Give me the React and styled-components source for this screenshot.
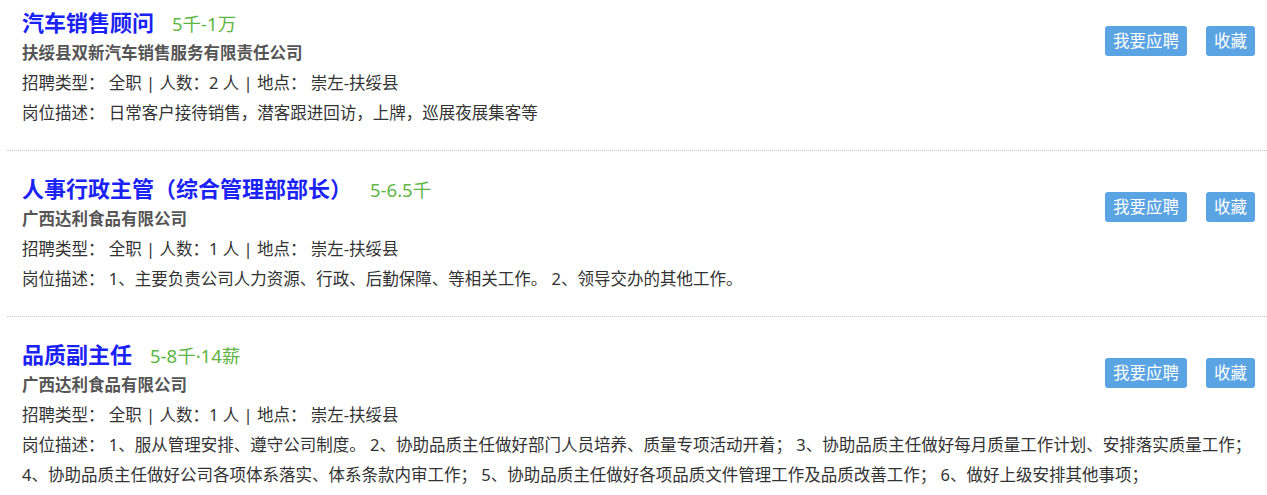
import React from 'react';
import styled, { createGlobalStyle } from 'styled-components';

const GlobalStyle = createGlobalStyle`
  body {
    margin: 0;
    background: #ffffff;
    font-family: "Noto Sans", "Noto Sans CJK SC", sans-serif;
  }
`;

const JobList = styled.div`
  margin: -15px 0 0 7px;
`;

const JobCard = styled.div`
  padding: 21px 8px 22px 15px;
  border-bottom: 1px dotted #c8c8c8;
  overflow: hidden;
`;

const Actions = styled.div`
  float: right;
  display: flex;
  gap: 19px;
  margin: 20px 4px 0 0;
`;

const ActionButton = styled.button`
  height: 30px;
  padding: 0 8px;
  border: none;
  border-radius: 3px;
  background: #5ba4e4;
  color: #ffffff;
  font-family: inherit;
  font-size: 16.5px;
  line-height: 30px;
  cursor: pointer;
`;

const TitleRow = styled.div`
  display: flex;
  align-items: baseline;
  height: 32px;
  line-height: 32px;
`;

const JobTitle = styled.a`
  font-size: 22px;
  font-weight: bold;
  color: #1a22f5;
  text-decoration: none;
`;

const Salary = styled.span`
  margin-left: 18px;
  font-size: 18.5px;
  color: #5db543;
`;

const Company = styled.div`
  font-size: 16.5px;
  font-weight: bold;
  color: #555555;
  line-height: 30px;
`;

const Line = styled.div`
  font-size: 16.5px;
  color: #333333;
  line-height: 30px;
`;

const jobs = [
  {
    title: '汽车销售顾问',
    salary: '5千-1万',
    company: '扶绥县双新汽车销售服务有限责任公司',
    count: 2,
    desc: '日常客户接待销售，潜客跟进回访，上牌，巡展夜展集客等',
  },
  {
    title: '人事行政主管（综合管理部部长）',
    salary: '5-6.5千',
    company: '广西达利食品有限公司',
    count: 1,
    desc: '1、主要负责公司人力资源、行政、后勤保障、等相关工作。 2、领导交办的其他工作。',
  },
  {
    title: '品质副主任',
    salary: '5-8千·14薪',
    company: '广西达利食品有限公司',
    count: 1,
    desc: '1、服从管理安排、遵守公司制度。 2、协助品质主任做好部门人员培养、质量专项活动开着； 3、协助品质主任做好每月质量工作计划、安排落实质量工作； 4、协助品质主任做好公司各项体系落实、体系条款内审工作； 5、协助品质主任做好各项品质文件管理工作及品质改善工作； 6、做好上级安排其他事项；',
  },
];

const App = () => {
  return (
    <>
      <GlobalStyle />
      <JobList>
        {jobs.map((job) => (
          <JobCard key={job.title}>
            <Actions>
              <ActionButton>我要应聘</ActionButton>
              <ActionButton>收藏</ActionButton>
            </Actions>
            <TitleRow>
              <JobTitle href='#'>{job.title}</JobTitle>
              <Salary>{job.salary}</Salary>
            </TitleRow>
            <Company>{job.company}</Company>
            <Line>招聘类型： 全职 | 人数：{job.count} 人 | 地点： 崇左-扶绥县</Line>
            <Line>岗位描述： {job.desc}</Line>
          </JobCard>
        ))}
      </JobList>
    </>
  );
};

export default App;
